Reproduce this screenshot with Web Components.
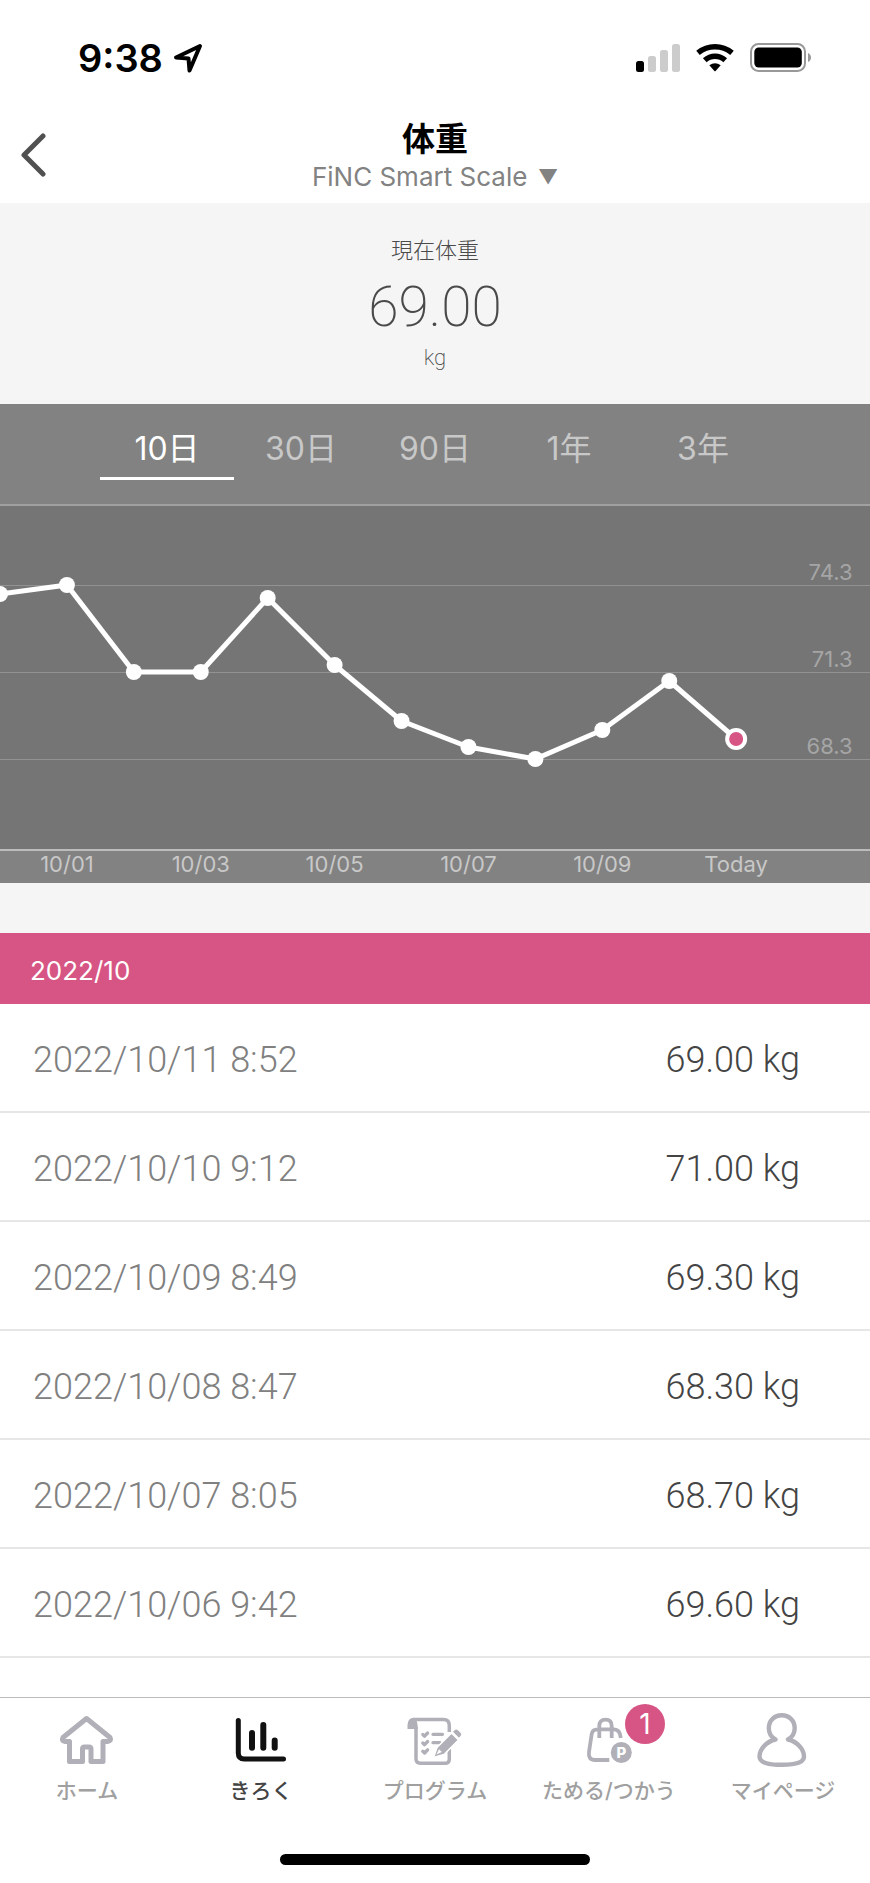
<!DOCTYPE html>
<html lang="ja">
<head>
<meta charset="utf-8">
<meta name="viewport" content="width=device-width, initial-scale=1">
<title>体重</title>
<style>
  :root {
    --pink: #d75584;
    --band: #f5f5f5;
    --ink: #4a4a4a;
    --muted: #828282;
    --ui: Inter, "Noto Sans CJK JP", sans-serif;
    --thin: Roboto, "Noto Sans CJK JP", sans-serif;
  }
  body { margin: 0; background: #fff; font-family: var(--ui); color: var(--ink); }
</style>
</head>
<body>
<app-screen>
  <status-bar slot="top" time="9:38"></status-bar>
  <page-header slot="top">体重</page-header>
  <current-weight unit="kg"><span slot="label">現在体重</span>69.00</current-weight>
  <period-tabs></period-tabs>
  <weight-chart></weight-chart>
  <weight-log month="2022/10"></weight-log>
  <tab-bar slot="bottom">
    <tab-item href="#home">
      <svg slot="icon" viewBox="0 0 60 60" width="60" height="60" fill="none" stroke="#b1b0b8" stroke-width="5" stroke-linejoin="round"><path d="M29.500 7.500 6 26.500Q4 30 8 30.500H12.500V50.500H25.500V38Q25.500 36 27.500 36H32Q34 36 34 38V50.500H46V30.500H50.500Q55 30 53 26.500Z"/></svg>
      ホーム
    </tab-item>
    <tab-item href="#records" current>
      <svg slot="icon" viewBox="0 0 60 60" width="60" height="60" fill="none" stroke="#111" stroke-linecap="round"><path stroke-width="5" d="M7.300 9.500V42Q7.300 48 13.300 48H52.500"/><path stroke-width="6" d="M21 22V36.700M32.300 14V36.700M43.700 29.500V36.700"/></svg>
      きろく
    </tab-item>
    <tab-item href="#program">
      <svg slot="icon" viewBox="0 0 60 60" width="60" height="60" fill="none" stroke="#b1b0b8" stroke-width="3.500">
        <path d="M8.500 8.500H38.500Q44.300 8.500 44.300 14.500V21M44.300 38V48Q44.300 52.300 40 52.300H15.500Q11 52.300 11 47.800V16"/>
        <path fill="#b1b0b8" stroke="none" d="M2.500 18V14.500Q2.500 7 9 6.800 12.800 9 12.800 18Z"/>
        <path stroke-width="3.300" stroke-linecap="round" stroke-linejoin="round" d="M17.800 23.500 19.600 25.200 22.600 22M17.800 32 19.600 33.700 22.600 30.500M17.800 40.300 19.600 42 22.600 38.800M28 23.300H37.500M28 31.700H35"/>
        <path fill="#b1b0b8" stroke="#fff" stroke-width="1.500" d="M28.500 46.500 32 36.500 46.500 22 53.500 29 39 43.500Z"/>
        <path fill="#fff" stroke="none" d="M31.500 43.500 34 38.200 36.800 41Z"/>
        <path fill="#b1b0b8" stroke="none" d="M48 20.800 50.300 18.800Q51.500 18 52.700 19L55.700 22Q56.700 23.300 55.800 24.500L54 26.800Z"/>
      </svg>
      プログラム
    </tab-item>
    <tab-item href="#points" badge="1">
      <svg slot="icon" viewBox="0 0 60 60" width="60" height="60" fill="none" stroke="#b1b0b8" stroke-width="3.800">
        <path d="M41.800 27Q41 18.300 35 18.300H18.500Q13.500 18.300 12.700 23L10 41Q9 49 16 49H30.300M20.300 27V15Q20.300 8.700 26.500 8.700 32.700 8.700 32.700 15V27"/>
        <circle cx="42.300" cy="41.500" r="10.500" fill="#b1b0b8" stroke="none"/>
        <text x="42.500" y="47" text-anchor="middle" font-family="Inter, sans-serif" font-size="15" font-weight="800" fill="#fff" stroke="none">P</text>
      </svg>
      ためる/つかう
    </tab-item>
    <tab-item href="#mypage">
      <svg slot="icon" viewBox="0 0 60 60" width="60" height="60" fill="none" stroke="#b1b0b8" stroke-width="4.400" stroke-linejoin="round"><path d="M22.500 28.500C18 26 15.800 22 15.800 17.300 15.800 9.500 21.500 4.300 28.700 4.300 36 4.300 41.700 9.500 41.700 17.300 41.700 22 39.500 26 35 28.500 44 30.500 51 38 51 45.500 51 51.500 42 53.800 28.700 53.800 15.500 53.800 6.500 51.500 6.500 45.500 6.500 38 13.500 30.500 22.500 28.500Z"/></svg>
      マイページ
    </tab-item>
  </tab-bar>
</app-screen>

<script>
  class Base extends HTMLElement {
    connectedCallback() {
      if (this.shadowRoot) return;
      this.attachShadow({ mode: "open" }).innerHTML = this.render();
    }
  }

  customElements.define("app-screen", class extends Base {
    render() {
      return `<style>
        :host { display: flex; flex-direction: column; min-height: 100vh; }
        main { flex: 1; }
      </style>
      <slot name="top"></slot><main><slot></slot></main><slot name="bottom"></slot>`;
    }
  });

  customElements.define("status-bar", class extends Base {
    render() {
      return `<style>
        :host { display: flex; justify-content: space-between; align-items: center; height: 116px; padding: 0 58px 0 78px; box-sizing: border-box; color: #000; }
        .left, .right { display: flex; align-items: center; }
        .left { gap: 10px; font-size: 38px; line-height: 48px; font-weight: 600; }
        .right { gap: 16px; }
        svg { display: block; }
      </style>
      <div class="left"><span>${this.getAttribute("time")}</span>
        <svg width="30" height="30" viewBox="0 0 30 30" fill="none" stroke="#000" stroke-width="4" stroke-linejoin="round"><path d="M27 3 3 14.500 15.500 15.500 16.500 27.500Z"/></svg>
      </div>
      <div class="right">
        <svg width="44" height="30" viewBox="0 0 44 30" fill="#ccc"><rect y="18" width="8" height="11" rx="2.500" fill="#000"/><rect x="12" y="13" width="8" height="16" rx="2.500"/><rect x="24" y="7" width="8" height="22" rx="2.500"/><rect x="36" y="1" width="8" height="28" rx="2.500"/></svg>
        <svg width="38" height="30" viewBox="0 0 38 30" fill="none" stroke="#000"><path stroke-width="5.500" d="M2 9.800Q9.500 3.700 19 3.700T36 9.800M8.800 17.200Q13.200 13.200 19 13.200T29.200 17.200"/><path fill="#000" stroke="none" d="M13.300 22.300Q19 18.300 24.700 22.300L19.600 28Q19 28.600 18.400 28Z"/></svg>
        <svg width="62" height="30" viewBox="0 0 62 30"><rect x="1" y="1" width="54" height="27" rx="7.500" fill="none" stroke="#999" stroke-width="2"/><rect x="4.300" y="4.500" width="47.500" height="20" rx="4.500"/><path d="M58 10Q61 11.500 61 14.500T58 19Z" fill="#999"/></svg>
      </div>`;
    }
  });

  customElements.define("page-header", class extends Base {
    render() {
      return `<style>
        :host { display: grid; grid-template-columns: 1fr auto 1fr; align-items: center; height: 87px; padding-bottom: 10px; box-sizing: border-box; }
        button { justify-self: start; padding: 0 20px; height: 72px; border: 0; background: none; }
        svg { display: block; }
        .mid { display: flex; flex-direction: column; align-items: center; }
        h1 { margin: 0; font-size: 33px; line-height: 44px; font-weight: 700; color: #000; }
        label { display: flex; align-items: center; gap: 10px; font-size: 26px; line-height: 32px; color: var(--muted); }
        select { appearance: none; border: 0; padding: 0; margin: 0; background: none; font: inherit; color: inherit; }
        label span { font-size: 20px; }
      </style>
      <button type="button" aria-label="戻る"><svg width="26" height="44" viewBox="0 0 26 44" fill="none" stroke="#505050" stroke-width="5" stroke-linecap="round" stroke-linejoin="round"><path d="M23 3 4 22 23 41"/></svg></button>
      <div class="mid"><h1><slot></slot></h1>
        <label><select aria-label="測定機器"><option>FiNC Smart Scale</option></select><span>▼</span></label></div>`;
    }
  });

  customElements.define("current-weight", class extends Base {
    render() {
      return `<style>
        :host { display: flex; flex-direction: column; align-items: center; padding: 31px 0 36px; background: var(--band); text-align: center; }
        .label { font-size: 22px; line-height: 32px; font-weight: 300; }
        .value { font: 200 55px/82px var(--thin); }
        .unit { font: 200 22px/20px var(--thin); }
      </style>
      <div class="label"><slot name="label"></slot></div>
      <div class="value"><slot></slot></div>
      <div class="unit">${this.getAttribute("unit")}</div>`;
    }
  });

  customElements.define("period-tabs", class extends Base {
    render() {
      const names = ["10日", "30日", "90日", "1年", "3年"];
      return `<style>
        :host { display: grid; grid-template-columns: repeat(5, 1fr); align-items: start; height: 102px; padding: 14px 100px 0; box-sizing: border-box; background: #828282; border-bottom: 2px solid #a0a0a0; }
        button { height: 62px; padding: 2px 0 0; border: 0; border-bottom: 3px solid transparent; background: none; font: 400 32px/56px var(--ui); color: #c8c8c8; }
        button[aria-selected=true] { color: #fff; border-color: #fff; }
      </style>` + names.map((n, i) => `<button type="button" role="tab" aria-selected="${i === 0}">${n}</button>`).join("");
    }
  });

  customElements.define("weight-chart", class extends Base {
    render() {
      const values = [74.0, 74.3, 71.3, 71.3, 73.85, 71.55, 69.6, 68.7, 68.3, 69.3, 71.0, 69.0];
      const x = i => (i / 13 * 100) + "%";
      const y = v => Math.round(79 + (74.3 - v) * 29);
      const last = values.length - 1;
      let s = "";
      for (const v of [74.3, 71.3, 68.3])
        s += `<line class="grid" x1="0" x2="100%" y1="${y(v)}" y2="${y(v)}"/><text x="98%" y="${y(v) - 5}">${v}</text>`;
      for (let i = 0; i < last; i++)
        s += `<line class="trend" x1="${x(i)}" y1="${y(values[i])}" x2="${x(i + 1)}" y2="${y(values[i + 1])}"/>`;
      values.forEach((v, i) => {
        s += i === last
          ? `<circle cx="${x(i)}" cy="${y(v)}" r="11" fill="#fff"/><circle class="today" cx="${x(i)}" cy="${y(v)}" r="7"/>`
          : `<circle cx="${x(i)}" cy="${y(v)}" r="8" fill="#fff"/>`;
      });
      return `<style>
        :host { display: block; background: #757575; }
        svg { display: block; width: 100%; height: 343px; }
        .grid { stroke: #929292; stroke-width: 1; shape-rendering: crispEdges; }
        .trend { stroke: #fff; stroke-width: 5; }
        .today { fill: var(--pink); }
        text { font: 400 22px var(--ui); fill: #a5a5a5; text-anchor: end; }
        .days { display: grid; grid-template-columns: repeat(6, 2fr) 1fr; height: 32px; border-top: 2px solid #bcbcbc; background: #828282; color: #c8c8c8; font-size: 22px; line-height: 26px; font-weight: 400; text-align: center; }
      </style>
      <svg role="img" aria-label="体重の推移">${s}</svg>
      <div class="days">${["10/01", "10/03", "10/05", "10/07", "10/09", "Today"].map(d => `<span>${d}</span>`).join("")}</div>`;
    }
  });

  customElements.define("weight-log", class extends Base {
    render() {
      const rows = [["2022/10/11 8:52", "69.00"], ["2022/10/10 9:12", "71.00"], ["2022/10/09 8:49", "69.30"], ["2022/10/08 8:47", "68.30"], ["2022/10/07 8:05", "68.70"], ["2022/10/06 9:42", "69.60"]];
      return `<style>
        :host { display: block; padding-top: 50px; background: linear-gradient(var(--band) 50px, #fff 0); }
        h2 { margin: 0; padding: 4px 30px 0; background: var(--pink); color: #fff; font-size: 26px; line-height: 67px; font-weight: 400; }
        table { width: 100%; border-collapse: separate; border-spacing: 0; font: 300 36px/44px var(--thin); }
        th, td { height: 103px; padding: 4px 0 0; border-bottom: 2px solid #e6e6e6; font-weight: 300; }
        th { padding-left: 33px; text-align: left; color: #808080; }
        td { padding-right: 70px; text-align: right; color: #444; }
      </style>
      <h2>${this.getAttribute("month")}</h2>
      <table><tbody>${rows.map(([d, w]) => `<tr><th scope="row">${d}</th><td>${w} kg</td></tr>`).join("")}</tbody></table>`;
    }
  });

  customElements.define("tab-bar", class extends Base {
    render() {
      return `<style>
        :host { display: block; border-top: 1px solid #bbb; background: #fff; }
        nav { display: grid; grid-template-columns: repeat(5, 1fr); padding-top: 13px; height: 143px; box-sizing: border-box; }
        .home { width: 310px; height: 11px; margin: 13px auto 18px; border-radius: 6px; background: #000; }
      </style>
      <nav><slot></slot></nav><div class="home"></div>`;
    }
  });

  customElements.define("tab-item", class extends Base {
    render() {
      const badge = this.getAttribute("badge");
      return `<style>
        :host { display: block; }
        a { display: flex; flex-direction: column; align-items: center; gap: 6px; color: #a0a0a0; text-decoration: none; font-size: 21px; line-height: 28px; font-weight: 500; white-space: nowrap; }
        :host([current]) a { color: #444; }
        .icon { position: relative; height: 60px; }
        .badge { position: absolute; left: 46px; top: -7px; width: 40px; height: 40px; border-radius: 50%; background: var(--pink); color: #fff; font-size: 28px; line-height: 40px; font-weight: 400; text-align: center; }
      </style>
      <a href="${this.getAttribute("href")}"><span class="icon"><slot name="icon"></slot>${badge ? `<span class="badge">${badge}</span>` : ""}</span><span><slot></slot></span></a>`;
    }
  });
</script>
</body>
</html>
